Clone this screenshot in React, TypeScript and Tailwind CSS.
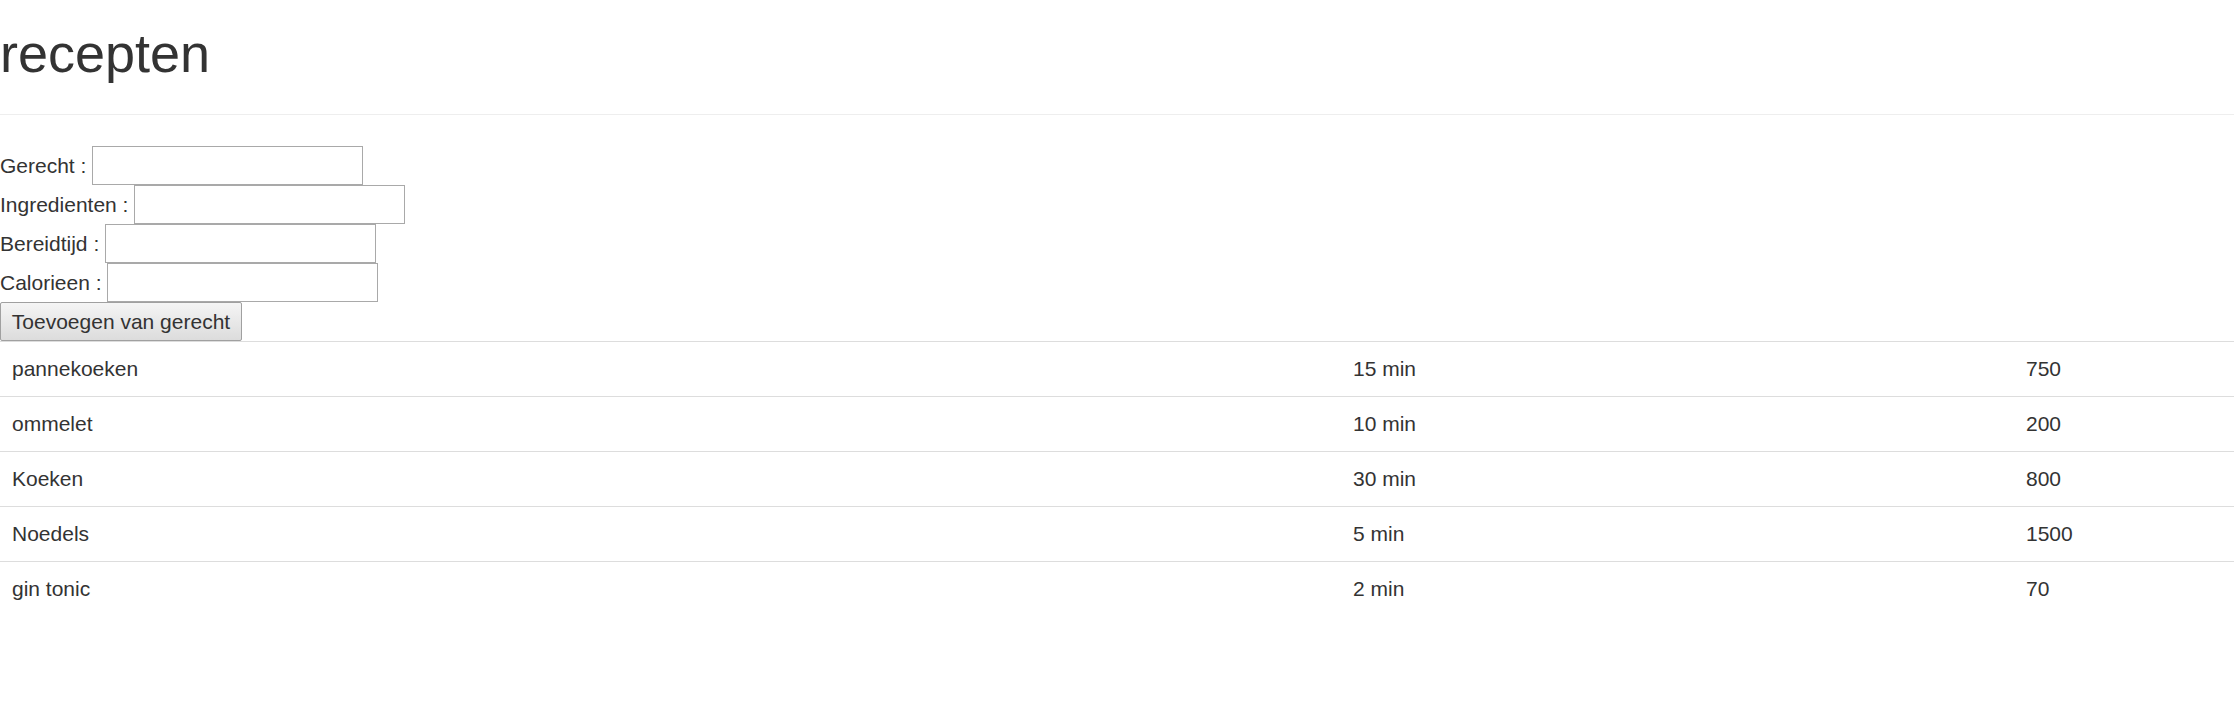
import React from "react";

const rows = [
  ["pannekoeken", "15 min", "750"],
  ["ommelet", "10 min", "200"],
  ["Koeken", "30 min", "800"],
  ["Noedels", "5 min", "1500"],
  ["gin tonic", "2 min", "70"],
];

const fields = ["Gerecht", "Ingredienten", "Bereidtijd", "Calorieen"];

export default function App() {
  return (
    <div
      className="min-h-[705px] bg-white text-[#333333] text-[21px] leading-[30px]"
      style={{ fontFamily: '"Liberation Sans", Arial, sans-serif' }}
    >
      <div className="border-b border-[#eeeeee] pb-[31px]">
        <h1 className="mt-[24px] text-[54px] leading-[59px] font-normal">recepten</h1>
      </div>
      <form className="mt-[31px] flex flex-col" onSubmit={(e) => e.preventDefault()}>
        {fields.map((f) => (
          <div key={f} className="flex h-[39px] items-center whitespace-pre">
            <label>{f + " : "}</label>
            <input
              type="text"
              className="h-[39px] w-[271px] border border-[#a9a9a9] bg-white px-[3px] outline-none"
            />
          </div>
        ))}
        <div className="flex">
          <button
            type="submit"
            className="h-[39px] w-[242px] rounded-[2px] border border-[#a0a0a0] bg-gradient-to-b from-[#f5f5f5] to-[#dcdcdc] text-[21px] leading-[30px] text-[#333333]"
          >
            Toevoegen van gerecht
          </button>
        </div>
      </form>
      <div className="flex flex-col">
        {rows.map((r) => (
          <div key={r[0]} className="grid grid-cols-[1341px_673px_1fr] border-t border-[#dddddd]">
            <div className="p-[12px]">{r[0]}</div>
            <div className="p-[12px]">{r[1]}</div>
            <div className="p-[12px]">{r[2]}</div>
          </div>
        ))}
      </div>
    </div>
  );
}
